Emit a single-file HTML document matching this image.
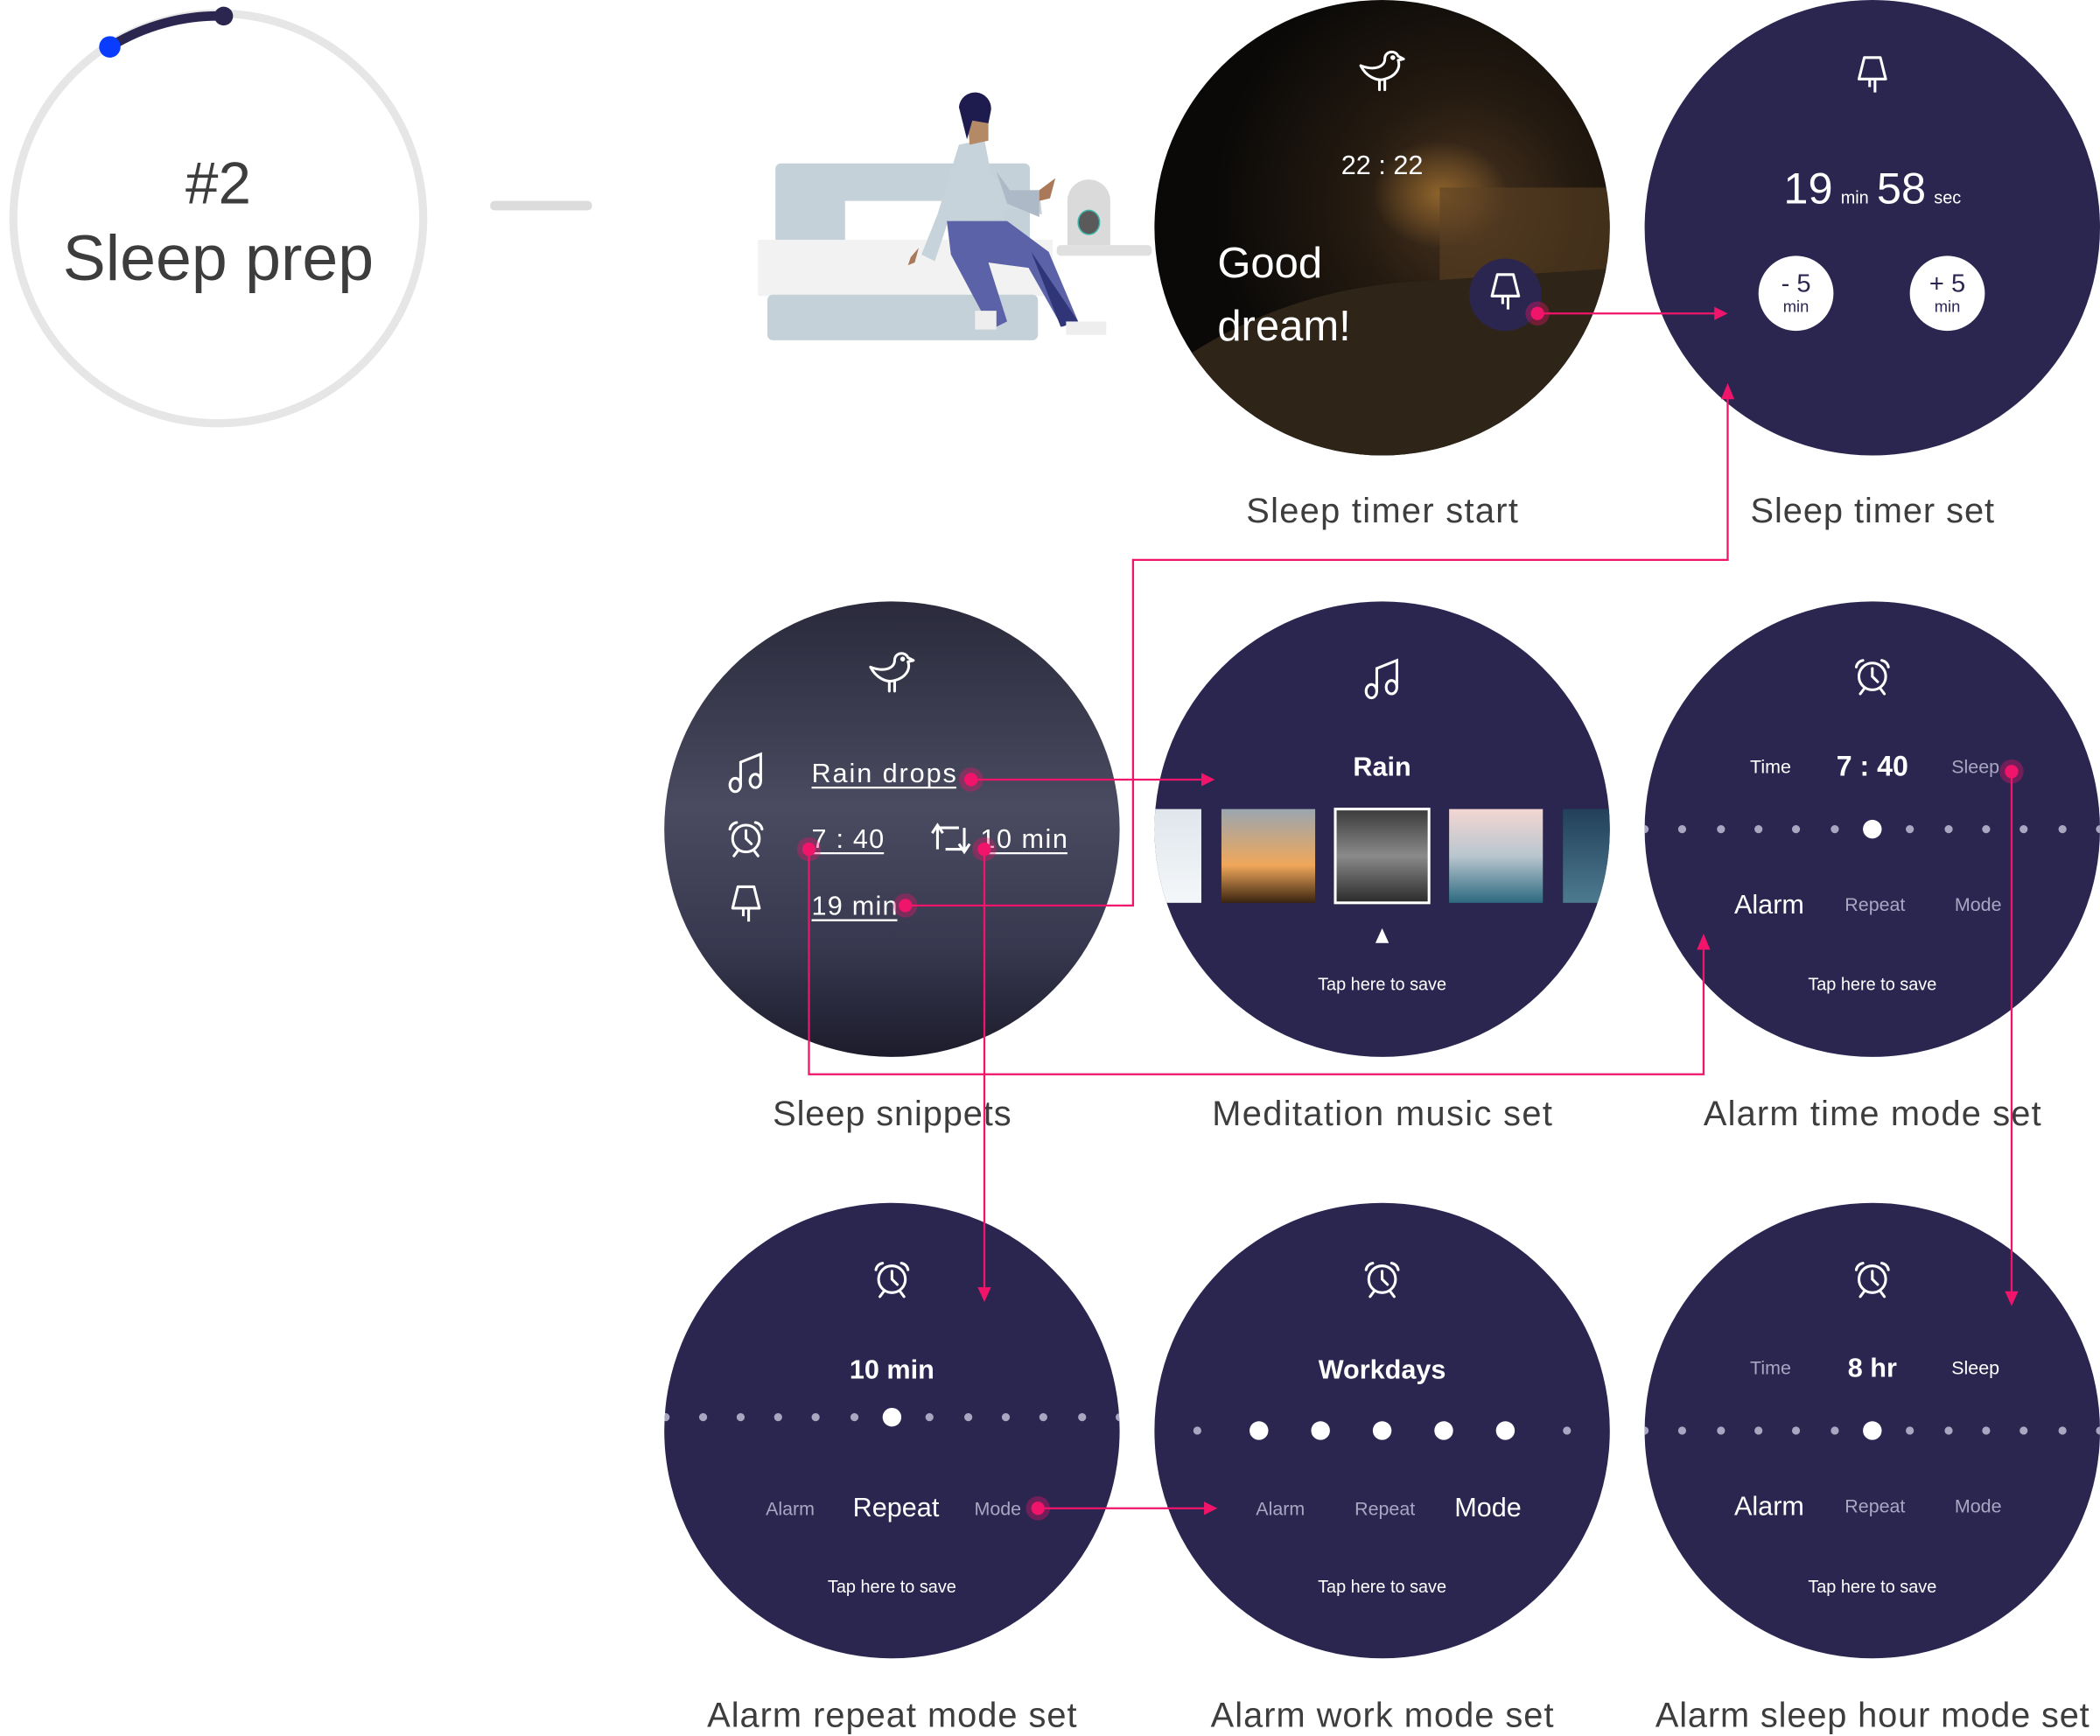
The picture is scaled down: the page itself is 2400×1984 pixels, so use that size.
<!DOCTYPE html>
<html><head><meta charset="utf-8"><style>
html,body{margin:0;padding:0;background:#fff;width:2400px;height:1984px;overflow:hidden}
svg{display:block}
text{font-family:"Liberation Sans",sans-serif}
</style></head><body>
<svg width="2400" height="1984" viewBox="0 0 1568 1296" preserveAspectRatio="none" xmlns="http://www.w3.org/2000/svg">
<defs>
<radialGradient id="bed" cx="0.68" cy="0.45" r="0.55">
<stop offset="0" stop-color="#4a3420"/><stop offset="0.45" stop-color="#241a10"/><stop offset="1" stop-color="#0a0908"/></radialGradient>
<radialGradient id="lampglow" cx="0.5" cy="0.5" r="0.5">
<stop offset="0" stop-color="#a0702f" stop-opacity="0.8"/><stop offset="1" stop-color="#a0702f" stop-opacity="0"/></radialGradient>
<linearGradient id="rain" x1="0" y1="0" x2="0" y2="1">
<stop offset="0" stop-color="#2a2a3c"/><stop offset="0.45" stop-color="#4a4a60"/><stop offset="0.75" stop-color="#383850"/><stop offset="1" stop-color="#1c1c2c"/></linearGradient>
<linearGradient id="t1" x1="0" y1="0" x2="0" y2="1"><stop offset="0" stop-color="#dfe6ec"/><stop offset="1" stop-color="#f4f7f9"/></linearGradient>
<linearGradient id="t2" x1="0" y1="0" x2="0" y2="1"><stop offset="0" stop-color="#9aa6b0"/><stop offset="0.6" stop-color="#f0a75a"/><stop offset="1" stop-color="#3a2410"/></linearGradient>
<linearGradient id="t3" x1="0" y1="0" x2="0" y2="1"><stop offset="0" stop-color="#3a3a3a"/><stop offset="0.5" stop-color="#8a8a8a"/><stop offset="1" stop-color="#2a2a2a"/></linearGradient>
<linearGradient id="t4" x1="0" y1="0" x2="0" y2="1"><stop offset="0" stop-color="#f3d6d2"/><stop offset="0.5" stop-color="#b9c6cf"/><stop offset="1" stop-color="#2c6a80"/></linearGradient>
<linearGradient id="t5" x1="0" y1="0" x2="0" y2="1"><stop offset="0" stop-color="#22405a"/><stop offset="1" stop-color="#4d7a90"/></linearGradient>
<clipPath id="cb"><circle cx="1032" cy="170" r="170"/></clipPath>
<clipPath id="cm"><circle cx="1032" cy="619" r="170"/></clipPath>
<clipPath id="ca"><circle cx="1398" cy="619" r="170"/></clipPath>
<clipPath id="cr"><circle cx="666" cy="1068" r="170"/></clipPath>
<clipPath id="cs"><circle cx="1398" cy="1068" r="170"/></clipPath>
<g id="bird" fill="none" stroke="#fff" stroke-width="2" stroke-linecap="round" stroke-linejoin="round">
<path d="M-16,-6 C-12,2 -4,6 2,4 C10,2 14,-4 12,-10 L16,-11 L12,-13 C10,-18 2,-17 2,-11 C2,-5 -6,-2 -16,-6 Z"/>
<path d="M-2,5 L-2,12 M2,5 L2,12"/><circle cx="8" cy="-12" r="0.8" fill="#fff"/></g>
<g id="lamp" fill="none" stroke="#fff" stroke-width="2" stroke-linejoin="round">
<path d="M-6,-12 L6,-12 L10,4 L-10,4 Z"/><path d="M-2,4 L-2,10 M2,4 L2,14"/></g>
<g id="alarm" fill="none" stroke="#fff" stroke-width="2" stroke-linecap="round">
<circle cx="0" cy="0" r="10"/><path d="M0,-6 L0,0 L4,4"/><path d="M-12,-7 A6,6 0 0 1 -7,-12 M12,-7 A6,6 0 0 0 7,-12"/><path d="M-6,9 L-9,13 M6,9 L9,13"/></g>
<g id="note" fill="none" stroke="#fff" stroke-width="2">
<ellipse cx="-8" cy="9" rx="4" ry="5"/><ellipse cx="7" cy="6" rx="4" ry="5"/><path d="M-4,9 L-4,-8 L11,-14 L11,6"/></g>
</defs>

<!-- Left progress ring -->
<circle cx="163" cy="163" r="153" fill="none" stroke="#e6e6e6" stroke-width="6"/>
<path d="M82,35 A153,153 0 0 1 167,12" fill="none" stroke="#2b2650" stroke-width="7" stroke-linecap="round"/>
<circle cx="167" cy="12" r="7" fill="#2b2650"/>
<circle cx="82" cy="35" r="8" fill="#0a3cff"/>
<text x="163" y="152" text-anchor="middle" font-size="44" fill="#3d3d3d">#2</text>
<text x="163" y="209" text-anchor="middle" font-size="48" fill="#3d3d3d">Sleep prep</text>
<rect x="366" y="150" width="76" height="7" rx="3" fill="#dcdcdc"/>

<!-- Illustration -->
<rect x="579" y="122" width="190" height="70" rx="4" fill="#c5d1d8"/>
<rect x="631" y="150" width="80" height="40" fill="#fff"/>
<rect x="566" y="179" width="220" height="42" fill="#f2f2f2"/>
<rect x="573" y="220" width="202" height="34" rx="4" fill="#c5d1d8"/>
<rect x="789" y="183" width="71" height="8" rx="3" fill="#e0e0e0"/>
<path d="M797,183 L797,150 A16,16 0 0 1 829,150 L829,183 Z" fill="#dadada"/>
<ellipse cx="813" cy="166" rx="8" ry="9" fill="#5a5a5a" stroke="#3fb3a8" stroke-width="1"/>
<path d="M716,108 L735,104 L740,130 L752,142 L776,142 L778,160 L752,155 L748,163 L708,165 L698,195 L688,190 L700,160 Z" fill="#c7d3da"/>
<path d="M744,128 L754,142 L776,142 L776,162 L752,152 Z" fill="#adb9c6"/>
<path d="M776,142 L788,133 L784,148 L776,150 Z" fill="#a9795a"/>
<path d="M707,165 L752,165 L783,188 L805,240 L793,244 L768,200 L738,196 L752,240 L740,246 L710,190 Z" fill="#5b62a8"/>
<path d="M770,188 L805,240 L792,244 Z" fill="#2f3577"/>
<path d="M686,185 L683,196 L678,198 L680,192 Z" fill="#a9795a"/>
<rect x="728" y="232" width="16" height="14" fill="#eeeeee"/><rect x="796" y="240" width="30" height="10" fill="#eeeeee"/>
<path d="M722,85 L738,82 L738,105 L724,108 Z" fill="#b48a66"/>
<path d="M716,80 A12,12 0 0 1 740,82 L738,92 L726,90 L722,104 Z" fill="#1e1b4f"/>

<!-- Row1 C1 Sleep timer start -->
<circle cx="1032" cy="170" r="170" fill="url(#bed)"/>
<g clip-path="url(#cb)">
<ellipse cx="1075" cy="145" rx="50" ry="40" fill="url(#lampglow)"/>
<rect x="1075" y="140" width="130" height="110" fill="#5b4123" opacity="0.6"/>
<path d="M860,340 L880,270 Q960,215 1060,210 L1210,200 L1210,340 Z" fill="#2e2418"/>
</g>
<use href="#bird" x="1032" y="55"/>
<text x="1032" y="130" text-anchor="middle" font-size="20" fill="#fff">22 : 22</text>
<text x="909" y="207" font-size="32" fill="#fff">Good</text>
<text x="909" y="254" font-size="32" fill="#fff">dream!</text>
<circle cx="1124" cy="220" r="27" fill="#2b2650"/>
<use href="#lamp" x="1124" y="217"/>

<!-- Row1 C2 Sleep timer set -->
<circle cx="1398" cy="170" r="170" fill="#2b2650"/>
<use href="#lamp" x="1398" y="55"/>
<text x="1398" y="152" text-anchor="middle" fill="#fff"><tspan font-size="33">19</tspan><tspan font-size="13" dx="6">min</tspan><tspan font-size="33" dx="6">58</tspan><tspan font-size="13" dx="6">sec</tspan></text>
<circle cx="1341" cy="219" r="28" fill="#fff"/><circle cx="1454" cy="219" r="28" fill="#fff"/>
<text x="1341" y="218" text-anchor="middle" font-size="19" fill="#2b2650">- 5</text>
<text x="1341" y="233" text-anchor="middle" font-size="12" fill="#2b2650">min</text>
<text x="1454" y="218" text-anchor="middle" font-size="19" fill="#2b2650">+ 5</text>
<text x="1454" y="233" text-anchor="middle" font-size="12" fill="#2b2650">min</text>

<!-- Row2 C1 Sleep snippets -->
<circle cx="666" cy="619" r="170" fill="url(#rain)"/>
<use href="#bird" x="666" y="504"/>
<use href="#note" x="557" y="577"/>
<use href="#alarm" x="557" y="626"/>
<use href="#lamp" x="557" y="674"/>
<g fill="#fff" font-size="20">
<text x="606" y="584" textLength="108">Rain drops</text>
<text x="606" y="633" textLength="54">7 : 40</text>
<text x="732" y="633" textLength="65">10 min</text>
<text x="606" y="683" textLength="64">19 min</text>
</g>
<line x1="606" y1="588" x2="714" y2="588" stroke="#fff" stroke-width="1.5"/>
<line x1="606" y1="637" x2="660" y2="637" stroke="#fff" stroke-width="1.5"/>
<line x1="732" y1="637" x2="797" y2="637" stroke="#fff" stroke-width="1.5"/>
<line x1="606" y1="687" x2="670" y2="687" stroke="#fff" stroke-width="1.5"/>
<path d="M700,634 L700,618 L716,618 M704,622 L700,616 L696,622 M720,618 L720,634 L706,634 M716,630 L720,636 L724,630" fill="none" stroke="#fff" stroke-width="2"/>

<!-- Row2 C2 Meditation -->
<circle cx="1032" cy="619" r="170" fill="#2b2650"/>
<use href="#note" x="1032" y="507"/>
<text x="1032" y="579" text-anchor="middle" font-size="20" font-weight="bold" fill="#fff">Rain</text>
<g clip-path="url(#cm)">
<rect x="862" y="604" width="35" height="70" fill="url(#t1)"/>
<rect x="912" y="604" width="70" height="70" fill="url(#t2)"/>
<rect x="997" y="604" width="70" height="70" fill="url(#t3)" stroke="#fff" stroke-width="2"/>
<rect x="1082" y="604" width="70" height="70" fill="url(#t4)"/>
<rect x="1167" y="604" width="40" height="70" fill="url(#t5)"/>
</g>
<path d="M1032,693 L1037,704 L1027,704 Z" fill="#fff"/>
<text x="1032" y="739" text-anchor="middle" font-size="13" fill="#fff">Tap here to save</text>

<!-- Row2 C3 Alarm time -->
<circle cx="1398" cy="619" r="170" fill="#2b2650"/>
<use href="#alarm" x="1398" y="505"/>
<text x="1322" y="577" text-anchor="middle" font-size="14" fill="#fff">Time</text>
<text x="1398" y="579" text-anchor="middle" font-size="21" font-weight="bold" fill="#fff">7 : 40</text>
<text x="1475" y="577" text-anchor="middle" font-size="14" fill="#a9a6c2">Sleep</text>
<g clip-path="url(#ca)" fill="#a9a6c2">
<circle cx="1228" cy="619" r="3"/><circle cx="1256" cy="619" r="3"/><circle cx="1285" cy="619" r="3"/><circle cx="1313" cy="619" r="3"/><circle cx="1341" cy="619" r="3"/><circle cx="1370" cy="619" r="3"/><circle cx="1426" cy="619" r="3"/><circle cx="1455" cy="619" r="3"/><circle cx="1483" cy="619" r="3"/><circle cx="1511" cy="619" r="3"/><circle cx="1540" cy="619" r="3"/><circle cx="1568" cy="619" r="3"/>
</g>
<circle cx="1398" cy="619" r="7" fill="#fff"/>
<text x="1321" y="682" text-anchor="middle" font-size="20" fill="#fff">Alarm</text>
<text x="1400" y="680" text-anchor="middle" font-size="14" fill="#a9a6c2">Repeat</text>
<text x="1477" y="680" text-anchor="middle" font-size="14" fill="#a9a6c2">Mode</text>
<text x="1398" y="739" text-anchor="middle" font-size="13" fill="#fff">Tap here to save</text>

<!-- Row3 C1 Repeat -->
<circle cx="666" cy="1068" r="170" fill="#2b2650"/>
<use href="#alarm" x="666" y="955"/>
<text x="666" y="1029" text-anchor="middle" font-size="20" font-weight="bold" fill="#fff">10 min</text>
<g clip-path="url(#cr)" fill="#a9a6c2">
<circle cx="497" cy="1058" r="3"/><circle cx="525" cy="1058" r="3"/><circle cx="553" cy="1058" r="3"/><circle cx="581" cy="1058" r="3"/><circle cx="609" cy="1058" r="3"/><circle cx="638" cy="1058" r="3"/><circle cx="694" cy="1058" r="3"/><circle cx="723" cy="1058" r="3"/><circle cx="751" cy="1058" r="3"/><circle cx="779" cy="1058" r="3"/><circle cx="808" cy="1058" r="3"/><circle cx="836" cy="1058" r="3"/>
</g>
<circle cx="666" cy="1058" r="7" fill="#fff"/>
<text x="590" y="1131" text-anchor="middle" font-size="14" fill="#a9a6c2">Alarm</text>
<text x="669" y="1132" text-anchor="middle" font-size="20" fill="#fff">Repeat</text>
<text x="745" y="1131" text-anchor="middle" font-size="14" fill="#a9a6c2">Mode</text>
<text x="666" y="1189" text-anchor="middle" font-size="13" fill="#fff">Tap here to save</text>

<!-- Row3 C2 Workdays -->
<circle cx="1032" cy="1068" r="170" fill="#2b2650"/>
<use href="#alarm" x="1032" y="955"/>
<text x="1032" y="1029" text-anchor="middle" font-size="20" font-weight="bold" fill="#fff">Workdays</text>
<circle cx="894" cy="1068" r="3" fill="#a9a6c2"/><circle cx="1170" cy="1068" r="3" fill="#a9a6c2"/>
<g fill="#fff"><circle cx="940" cy="1068" r="7"/><circle cx="986" cy="1068" r="7"/><circle cx="1032" cy="1068" r="7"/><circle cx="1078" cy="1068" r="7"/><circle cx="1124" cy="1068" r="7"/></g>
<text x="956" y="1131" text-anchor="middle" font-size="14" fill="#a9a6c2">Alarm</text>
<text x="1034" y="1131" text-anchor="middle" font-size="14" fill="#a9a6c2">Repeat</text>
<text x="1111" y="1132" text-anchor="middle" font-size="20" fill="#fff">Mode</text>
<text x="1032" y="1189" text-anchor="middle" font-size="13" fill="#fff">Tap here to save</text>

<!-- Row3 C3 Sleep hour -->
<circle cx="1398" cy="1068" r="170" fill="#2b2650"/>
<use href="#alarm" x="1398" y="955"/>
<text x="1322" y="1026" text-anchor="middle" font-size="14" fill="#a9a6c2">Time</text>
<text x="1398" y="1028" text-anchor="middle" font-size="20" font-weight="bold" fill="#fff">8 hr</text>
<text x="1475" y="1026" text-anchor="middle" font-size="14" fill="#fff">Sleep</text>
<g clip-path="url(#cs)" fill="#a9a6c2">
<circle cx="1228" cy="1068" r="3"/><circle cx="1256" cy="1068" r="3"/><circle cx="1285" cy="1068" r="3"/><circle cx="1313" cy="1068" r="3"/><circle cx="1341" cy="1068" r="3"/><circle cx="1370" cy="1068" r="3"/><circle cx="1426" cy="1068" r="3"/><circle cx="1455" cy="1068" r="3"/><circle cx="1483" cy="1068" r="3"/><circle cx="1511" cy="1068" r="3"/><circle cx="1540" cy="1068" r="3"/><circle cx="1568" cy="1068" r="3"/>
</g>
<circle cx="1398" cy="1068" r="7" fill="#fff"/>
<text x="1321" y="1131" text-anchor="middle" font-size="20" fill="#fff">Alarm</text>
<text x="1400" y="1129" text-anchor="middle" font-size="14" fill="#a9a6c2">Repeat</text>
<text x="1477" y="1129" text-anchor="middle" font-size="14" fill="#a9a6c2">Mode</text>
<text x="1398" y="1189" text-anchor="middle" font-size="13" fill="#fff">Tap here to save</text>

<!-- Labels -->
<g font-size="26" fill="#3d3d3d" text-anchor="middle">
<text x="1032" y="390" textLength="203">Sleep timer start</text>
<text x="1398" y="390" textLength="182">Sleep timer set</text>
<text x="666" y="840" textLength="178">Sleep snippets</text>
<text x="1032" y="840" textLength="254">Meditation music set</text>
<text x="1398" y="840" textLength="252">Alarm time mode set</text>
<text x="666" y="1289" textLength="276">Alarm repeat mode set</text>
<text x="1032" y="1289" textLength="256">Alarm work mode set</text>
<text x="1398" y="1289" textLength="324">Alarm sleep hour mode set</text>
</g>

<!-- Connectors -->
<g fill="none" stroke="#f0146a" stroke-width="1.5">
<path d="M1148,234 L1282,234"/>
<path d="M676,676 L846,676 L846,418 L1290,418 L1290,296"/>
<path d="M725,582 L898,582"/>
<path d="M604,634 L604,802 L1272,802 L1272,706"/>
<path d="M735,634 L735,964"/>
<path d="M1502,576 L1502,966"/>
<path d="M775,1126 L902,1126"/>
</g>
<g fill="#f0146a">
<path d="M1290,234 L1280,229 L1280,239 Z"/>
<path d="M1290,286 L1285,298 L1295,298 Z"/>
<path d="M907,582 L897,577 L897,587 Z"/>
<path d="M1272,697 L1267,709 L1277,709 Z"/>
<path d="M735,972 L730,961 L740,961 Z"/>
<path d="M1502,975 L1497,964 L1507,964 Z"/>
<path d="M909,1126 L899,1121 L899,1131 Z"/>
</g>
<g fill="#f0146a">
<circle cx="1148" cy="234" r="9" opacity="0.35"/><circle cx="1148" cy="234" r="5"/>
<circle cx="725" cy="582" r="9" opacity="0.35"/><circle cx="725" cy="582" r="5"/>
<circle cx="604" cy="634" r="9" opacity="0.35"/><circle cx="604" cy="634" r="5"/>
<circle cx="735" cy="634" r="9" opacity="0.35"/><circle cx="735" cy="634" r="5"/>
<circle cx="676" cy="676" r="9" opacity="0.35"/><circle cx="676" cy="676" r="5"/>
<circle cx="1502" cy="576" r="9" opacity="0.35"/><circle cx="1502" cy="576" r="5"/>
<circle cx="775" cy="1126" r="9" opacity="0.35"/><circle cx="775" cy="1126" r="5"/>
</g>
</svg>
</body></html>
